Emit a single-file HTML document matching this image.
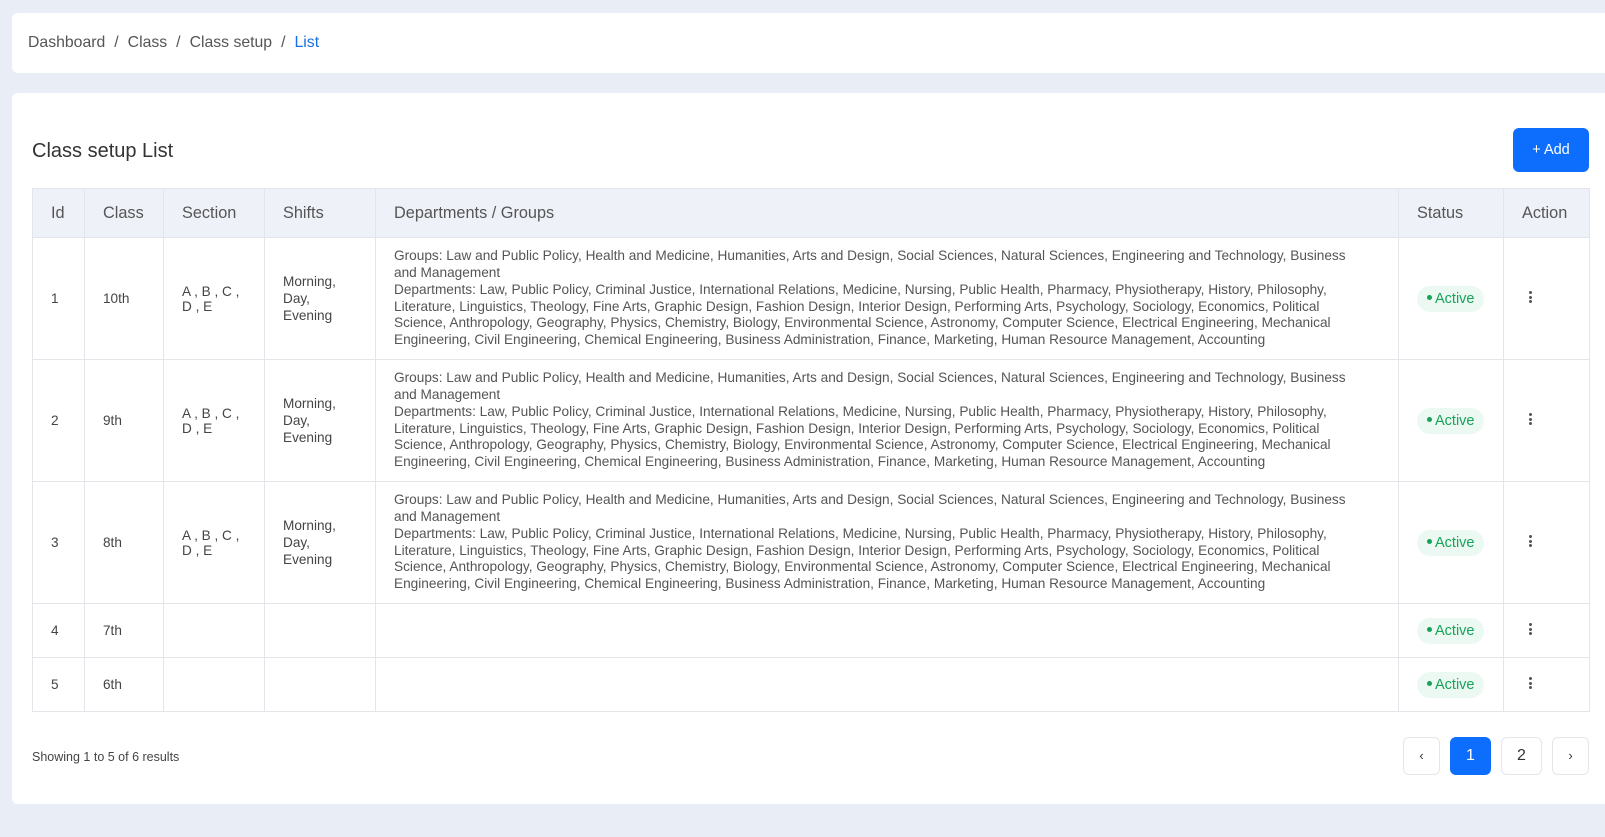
<!DOCTYPE html>
<html><head><meta charset="utf-8"><style>
*{box-sizing:border-box;margin:0;padding:0}
body{width:1605px;height:837px;background:#e9eef6;font-family:"Liberation Sans",sans-serif;color:#444;position:relative;overflow:hidden}
.bc{position:absolute;left:12px;top:13px;width:1620px;height:60px;background:#fff;border-radius:6px;font-size:15.8px;color:#555;padding:0 0 0 16px;line-height:60px;white-space:nowrap}
.bc span.s{margin:0 9px}
.bc .cur{color:#1c6fe0}
.card{position:absolute;left:12px;top:93px;width:1620px;height:711px;background:#fff;border-radius:6px}
h1{position:absolute;left:20px;top:47px;font-size:20px;font-weight:normal;color:#333}
.add{position:absolute;left:1501px;top:35px;width:76px;height:44px;background:#0d6efd;border-radius:6px;color:#fff;font-size:14.5px;line-height:44px;text-align:center}
table{position:absolute;left:20px;top:95px;border-collapse:collapse;table-layout:fixed;width:1557px}
td,th{border:1px solid #e2e5ea;text-align:left;vertical-align:middle;font-size:13.6px;padding:0 0 0 18px;color:#444}
th{background:#eef2f8;height:49px;font-weight:normal;font-size:16.3px;color:#555}
tr.big td{height:122px}
tr.sm td{height:54px}
.dep{font-size:13.65px;line-height:16.7px;white-space:nowrap;color:#555}
.badge{display:inline-block;background:#ecf9f2;color:#16a35a;border-radius:14px;height:26px;line-height:26px;padding:0 9px 0 10px;font-size:14.5px}
.badge i{display:inline-block;width:5px;height:5px;border-radius:50%;background:#16a35a;vertical-align:middle;margin-right:3px;position:relative;top:-1px}
.dots{display:inline-block;width:3px;margin-left:7px}
.dots b{display:block;width:3px;height:3px;background:#555;border-radius:50%;margin:1.5px 0}
.show{position:absolute;left:20px;top:657px;font-size:12.5px;color:#444}
.pg{position:absolute;top:644px;height:38px;border:1px solid #e4e6ea;border-radius:6px;text-align:center;line-height:36px;font-size:16px;color:#333;background:#fff}
</style></head><body>
<div class="bc">Dashboard<span class="s">/</span>Class<span class="s">/</span>Class setup<span class="s">/</span><span class="cur">List</span></div>
<div class="card">
<h1>Class setup List</h1>
<div class="add">+ Add</div>
<table>
<colgroup><col style="width:52px"><col style="width:79px"><col style="width:101px"><col style="width:111px"><col style="width:1023px"><col style="width:105px"><col style="width:86px"></colgroup>
<tr><th>Id</th><th>Class</th><th>Section</th><th>Shifts</th><th>Departments / Groups</th><th>Status</th><th>Action</th></tr>
<tr class="big"><td>1</td><td>10th</td><td>A , B , C ,<br>D , E</td><td style="line-height:17px">Morning,<br>Day,<br>Evening</td><td class="dep">Groups: Law and Public Policy, Health and Medicine, Humanities, Arts and Design, Social Sciences, Natural Sciences, Engineering and Technology, Business<br>and Management<br>Departments: Law, Public Policy, Criminal Justice, International Relations, Medicine, Nursing, Public Health, Pharmacy, Physiotherapy, History, Philosophy,<br>Literature, Linguistics, Theology, Fine Arts, Graphic Design, Fashion Design, Interior Design, Performing Arts, Psychology, Sociology, Economics, Political<br>Science, Anthropology, Geography, Physics, Chemistry, Biology, Environmental Science, Astronomy, Computer Science, Electrical Engineering, Mechanical<br>Engineering, Civil Engineering, Chemical Engineering, Business Administration, Finance, Marketing, Human Resource Management, Accounting</td><td><span class="badge"><i></i>Active</span></td><td><span class="dots"><b></b><b></b><b></b></span></td></tr>
<tr class="big"><td>2</td><td>9th</td><td>A , B , C ,<br>D , E</td><td style="line-height:17px">Morning,<br>Day,<br>Evening</td><td class="dep">Groups: Law and Public Policy, Health and Medicine, Humanities, Arts and Design, Social Sciences, Natural Sciences, Engineering and Technology, Business<br>and Management<br>Departments: Law, Public Policy, Criminal Justice, International Relations, Medicine, Nursing, Public Health, Pharmacy, Physiotherapy, History, Philosophy,<br>Literature, Linguistics, Theology, Fine Arts, Graphic Design, Fashion Design, Interior Design, Performing Arts, Psychology, Sociology, Economics, Political<br>Science, Anthropology, Geography, Physics, Chemistry, Biology, Environmental Science, Astronomy, Computer Science, Electrical Engineering, Mechanical<br>Engineering, Civil Engineering, Chemical Engineering, Business Administration, Finance, Marketing, Human Resource Management, Accounting</td><td><span class="badge"><i></i>Active</span></td><td><span class="dots"><b></b><b></b><b></b></span></td></tr>
<tr class="big"><td>3</td><td>8th</td><td>A , B , C ,<br>D , E</td><td style="line-height:17px">Morning,<br>Day,<br>Evening</td><td class="dep">Groups: Law and Public Policy, Health and Medicine, Humanities, Arts and Design, Social Sciences, Natural Sciences, Engineering and Technology, Business<br>and Management<br>Departments: Law, Public Policy, Criminal Justice, International Relations, Medicine, Nursing, Public Health, Pharmacy, Physiotherapy, History, Philosophy,<br>Literature, Linguistics, Theology, Fine Arts, Graphic Design, Fashion Design, Interior Design, Performing Arts, Psychology, Sociology, Economics, Political<br>Science, Anthropology, Geography, Physics, Chemistry, Biology, Environmental Science, Astronomy, Computer Science, Electrical Engineering, Mechanical<br>Engineering, Civil Engineering, Chemical Engineering, Business Administration, Finance, Marketing, Human Resource Management, Accounting</td><td><span class="badge"><i></i>Active</span></td><td><span class="dots"><b></b><b></b><b></b></span></td></tr>
<tr class="sm"><td>4</td><td>7th</td><td></td><td></td><td></td><td><span class="badge"><i></i>Active</span></td><td><span class="dots"><b></b><b></b><b></b></span></td></tr>
<tr class="sm"><td>5</td><td>6th</td><td></td><td></td><td></td><td><span class="badge"><i></i>Active</span></td><td><span class="dots"><b></b><b></b><b></b></span></td></tr>
</table>
<div class="show">Showing 1 to 5 of 6 results</div>
<div class="pg" style="left:1391px;width:37px;font-size:13px">‹</div>
<div class="pg" style="left:1438px;width:41px;background:#0d6efd;border-color:#0d6efd;color:#fff">1</div>
<div class="pg" style="left:1489px;width:41px">2</div>
<div class="pg" style="left:1540px;width:37px;font-size:13px">›</div>
</div>
</body></html>
